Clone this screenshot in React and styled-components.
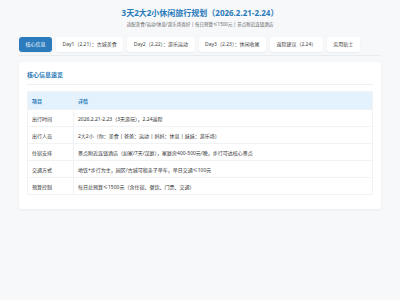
import React from 'react'
import styled, { createGlobalStyle } from 'styled-components'

const GlobalStyle = createGlobalStyle`
  html, body {
    margin: 0;
    padding: 0;
    background: #f6f8fa;
    font-family: "Noto Sans", "Noto Sans CJK SC", sans-serif;
    color: #333;
  }
`

const Page = styled.div`
  padding: 8px 19px 20px;
`

const Header = styled.header`
  text-align: center;
`

const Title = styled.h1`
  margin: 0;
  font-size: 8px;
  line-height: 10px;
  font-weight: 700;
  color: #2b7bba;
`

const Subtitle = styled.p`
  margin: 3px 0 0;
  font-size: 4.5px;
  line-height: 6px;
  color: #666;
`

const TabBar = styled.nav`
  display: flex;
  gap: 4px;
  margin-top: 10px;
  padding-bottom: 3px;
  border-bottom: 1px solid #e9ecef;
`

const Tab = styled.button`
  border: none;
  border-radius: 3px;
  padding: 4px 6.5px;
  font-family: inherit;
  font-size: 5px;
  line-height: 7px;
  background: ${(p) => (p.active ? '#2b7bbd' : '#fff')};
  color: ${(p) => (p.active ? '#fff' : '#444')};
  box-shadow: 0 1px 2px rgba(0, 0, 0, 0.05);
`

const Card = styled.section`
  margin-top: 6px;
  background: #fff;
  border-radius: 3px;
  padding: 8px 8px 14px;
  box-shadow: 0 1px 3px rgba(0, 0, 0, 0.05);
`

const CardTitle = styled.h2`
  margin: 0 0 6px;
  padding-bottom: 4px;
  font-size: 6px;
  line-height: 10px;
  font-weight: 700;
  color: #2b7bba;
  border-bottom: 1px solid #eef0f2;
`

const Table = styled.table`
  width: 100%;
  border-collapse: collapse;
  font-size: 5px;
  border: 1px solid #f1f2f4;
`

const HeadCell = styled.th`
  height: 17px;
  padding: 0 4px;
  text-align: left;
  font-weight: 600;
  color: #2b7bba;
  background: #e4f2fd;
  border-right: 1px solid #f1f2f4;
  width: ${(p) => (p.narrow ? '37px' : 'auto')};
`

const Cell = styled.td`
  height: 16px;
  padding: 0 4px;
  color: #333;
  border-top: 1px solid #f1f2f4;
  border-right: 1px solid #f1f2f4;
`

const rows = [
  ['出行时间', '2026.2.21-2.23（3天游玩），2.24返程'],
  ['出行人员', '2大2小（你：美食 | 爸爸：运动 | 妈妈：休息 | 妹妹：游乐场）'],
  ['住宿安排', '景点附近连锁酒店（如家/7天/汉庭），家庭房400-500元/晚，步行可达核心景点'],
  ['交通方式', '地铁+步行为主，园区/古城可租亲子单车，单日交通≤100元'],
  ['预算控制', '每日总预算≤1500元（含住宿、餐饮、门票、交通）'],
]

const tabs = [
  '核心信息',
  'Day1（2.21）：古城美食',
  'Day2（2.22）：游乐运动',
  'Day3（2.23）：休闲收尾',
  '返程建议（2.24）',
  '实用贴士',
]

const App = () => {
  return (
    <>
      <GlobalStyle />
      <Page>
        <Header>
          <Title>3天2大2小休闲旅行规划（2026.2.21-2.24）</Title>
          <Subtitle>
            适配美食/运动/休息/游乐场喜好 | 每日预算≤1500元 | 景点附近连锁酒店
          </Subtitle>
        </Header>

        <TabBar>
          {tabs.map((t, i) => (
            <Tab key={t} active={i === 0}>
              {t}
            </Tab>
          ))}
        </TabBar>

        <Card>
          <CardTitle>核心信息速览</CardTitle>
          <Table>
            <thead>
              <tr>
                <HeadCell narrow>项目</HeadCell>
                <HeadCell>详情</HeadCell>
              </tr>
            </thead>
            <tbody>
              {rows.map(([k, v]) => (
                <tr key={k}>
                  <Cell>{k}</Cell>
                  <Cell>{v}</Cell>
                </tr>
              ))}
            </tbody>
          </Table>
        </Card>
      </Page>
    </>
  )
}

export default App
